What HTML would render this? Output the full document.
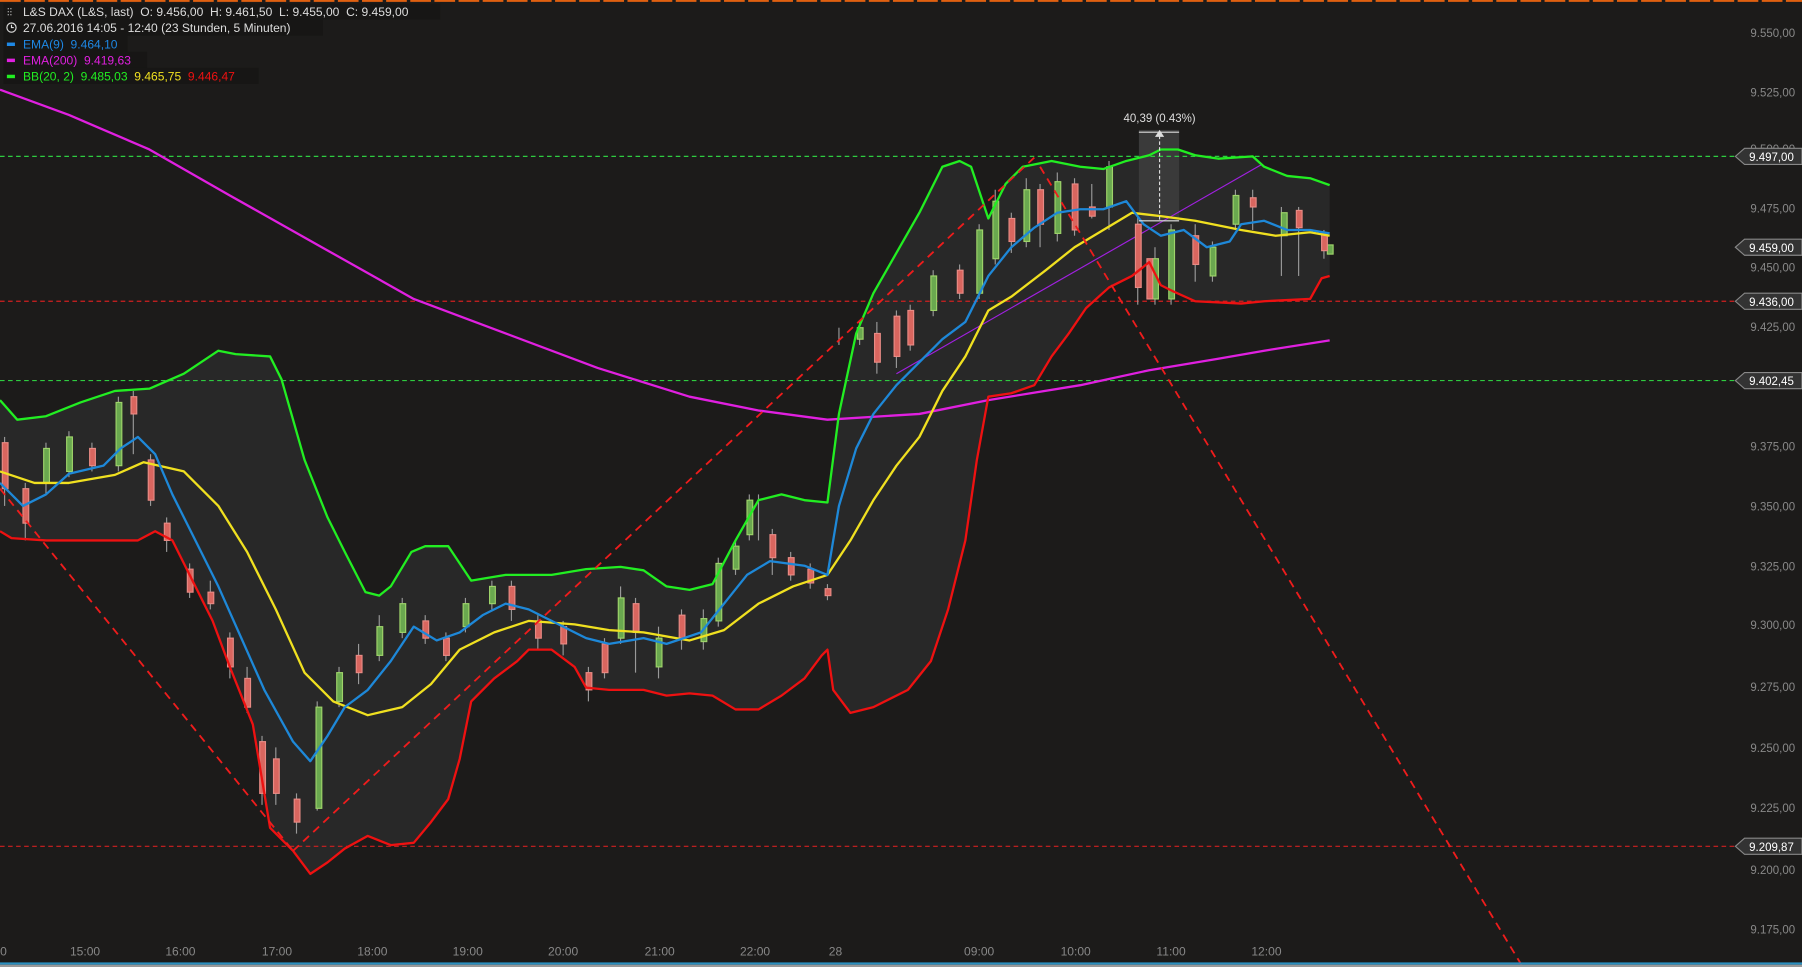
<!DOCTYPE html>
<html><head><meta charset="utf-8"><style>
html,body{margin:0;padding:0;background:#1c1b1a;overflow:hidden}
svg{display:block}
text{font-family:"Liberation Sans",sans-serif;white-space:pre}
</style></head><body>
<svg width="1802" height="967" viewBox="0 0 1568 841" preserveAspectRatio="none" xml:space="preserve">
<rect width="1568" height="841" fill="#1c1b1a"/>
<line x1="0" y1="0.8" x2="1568" y2="0.8" stroke="#e06010" stroke-width="1.6" stroke-dasharray="18 3"/>
<polygon fill="#2a2a2a" opacity="0.9" points="0,348 15,365 40,362 70,350 100,340 130,338 160,325 175,315 190,305 205,308 235,310 245,330 265,400 285,450 300,480 318,515 330,518 340,510 358,480 370,475 390,475 400,490 410,505 440,500 480,500 510,495 540,493 560,496 580,510 600,513 620,508 640,470 660,435 680,430 700,435 720,437 730,360 745,290 760,255 780,220 800,185 820,145 835,140 845,145 860,190 875,160 890,145 915,140 940,145 960,147 980,140 1000,135 1010,130 1025,130 1040,135 1060,138 1090,136 1100,145 1120,153 1140,155 1157,161 1157,240 1150,242 1140,260 1100,262 1080,264 1040,262 1020,253 1010,248 1000,228 985,240 965,250 945,268 930,290 915,310 900,335 880,342 860,345 850,400 840,470 825,530 810,575 790,600 760,615 740,620 725,600 720,565 715,570 700,590 680,605 660,617 640,617 620,605 600,603 580,605 560,600 530,600 510,598 500,580 480,565 460,565 450,575 430,590 410,610 400,660 390,695 375,715 360,733 340,735 320,727 300,738 285,750 270,760 255,740 235,720 220,630 200,580 185,540 165,500 150,470 135,462 120,470 80,470 40,470 10,468 0,462"/>
<rect x="991" y="113" width="35" height="80" fill="#3a3a3a"/>
<g stroke-dasharray="4 3" stroke-width="1">
<line x1="0" y1="136" x2="1510" y2="136" stroke="#2ecc40"/>
<line x1="0" y1="262" x2="1510" y2="262" stroke="#d02020"/>
<line x1="0" y1="331" x2="1510" y2="331" stroke="#2ecc40"/>
<line x1="0" y1="736" x2="1510" y2="736" stroke="#d02020"/>
</g>
<g fill="none" stroke-width="2" stroke-linejoin="round">
<polyline stroke="#e020e0" points="0,78 60,100 130,130 200,170 280,215 360,260 440,290 520,320 600,345 660,357 720,365 800,360 860,348 940,335 1000,322 1060,312 1100,305 1157,296"/>
<line x1="780" y1="325" x2="1098" y2="143" stroke="#a020e0" stroke-width="1"/>
</g>
<g stroke-width="1">
<g stroke="#999">
<line x1="4" y1="380" x2="4" y2="440"/><line x1="22" y1="420" x2="22" y2="470"/><line x1="40" y1="385" x2="40" y2="430"/><line x1="60" y1="375" x2="60" y2="415"/><line x1="80" y1="385" x2="80" y2="410"/><line x1="103" y1="345" x2="103" y2="410"/><line x1="116" y1="340" x2="116" y2="395"/><line x1="131" y1="395" x2="131" y2="440"/><line x1="145" y1="450" x2="145" y2="480"/><line x1="165" y1="490" x2="165" y2="520"/><line x1="183" y1="505" x2="183" y2="530"/><line x1="200" y1="550" x2="200" y2="590"/><line x1="215" y1="580" x2="215" y2="620"/><line x1="228" y1="640" x2="228" y2="700"/><line x1="240" y1="650" x2="240" y2="700"/><line x1="258" y1="690" x2="258" y2="725"/><line x1="276" y1="610" x2="276" y2="705"/><line x1="295" y1="580" x2="295" y2="615"/><line x1="312" y1="560" x2="312" y2="595"/><line x1="330" y1="535" x2="330" y2="575"/><line x1="350" y1="520" x2="350" y2="555"/><line x1="370" y1="535" x2="370" y2="560"/><line x1="388" y1="550" x2="388" y2="575"/><line x1="405" y1="520" x2="405" y2="550"/><line x1="428" y1="505" x2="428" y2="530"/><line x1="445" y1="505" x2="445" y2="540"/><line x1="468" y1="535" x2="468" y2="565"/><line x1="490" y1="540" x2="490" y2="570"/><line x1="512" y1="580" x2="512" y2="610"/><line x1="526" y1="555" x2="526" y2="590"/><line x1="540" y1="510" x2="540" y2="560"/><line x1="553" y1="520" x2="553" y2="585"/><line x1="573" y1="545" x2="573" y2="590"/><line x1="593" y1="530" x2="593" y2="565"/><line x1="612" y1="530" x2="612" y2="565"/><line x1="625" y1="485" x2="625" y2="545"/><line x1="640" y1="470" x2="640" y2="500"/><line x1="652" y1="430" x2="652" y2="470"/><line x1="660" y1="430" x2="660" y2="470"/><line x1="672" y1="460" x2="672" y2="500"/><line x1="688" y1="480" x2="688" y2="505"/><line x1="705" y1="490" x2="705" y2="512"/><line x1="720" y1="508" x2="720" y2="522"/><line x1="730" y1="285" x2="730" y2="300"/><line x1="748" y1="280" x2="748" y2="300"/><line x1="763" y1="280" x2="763" y2="325"/><line x1="780" y1="270" x2="780" y2="320"/><line x1="792" y1="265" x2="792" y2="305"/><line x1="812" y1="235" x2="812" y2="275"/><line x1="835" y1="230" x2="835" y2="260"/><line x1="852" y1="195" x2="852" y2="260"/><line x1="866" y1="165" x2="866" y2="230"/><line x1="880" y1="185" x2="880" y2="220"/><line x1="893" y1="155" x2="893" y2="215"/><line x1="905" y1="160" x2="905" y2="215"/><line x1="920" y1="150" x2="920" y2="210"/><line x1="935" y1="155" x2="935" y2="205"/><line x1="950" y1="160" x2="950" y2="190"/><line x1="965" y1="140" x2="965" y2="200"/><line x1="990" y1="185" x2="990" y2="265"/><line x1="1005" y1="215" x2="1005" y2="265"/><line x1="1019" y1="195" x2="1019" y2="265"/><line x1="1040" y1="195" x2="1040" y2="245"/><line x1="1055" y1="210" x2="1055" y2="245"/><line x1="1075" y1="165" x2="1075" y2="200"/><line x1="1090" y1="165" x2="1090" y2="200"/><line x1="1115" y1="180" x2="1115" y2="240"/><line x1="1130" y1="180" x2="1130" y2="240"/><line x1="1152" y1="200" x2="1152" y2="225"/>
</g>
<g fill="#6aa84f" stroke="#9ed36a">
<rect x="38" y="390" width="5" height="30"/><rect x="58" y="380" width="5" height="30"/><rect x="101" y="350" width="5" height="55"/><rect x="275" y="615" width="5" height="88"/><rect x="293" y="585" width="5" height="25"/><rect x="328" y="545" width="5" height="25"/><rect x="348" y="525" width="5" height="25"/><rect x="403" y="525" width="5" height="20"/><rect x="426" y="510" width="5" height="15"/><rect x="538" y="520" width="5" height="35"/><rect x="571" y="555" width="5" height="25"/><rect x="610" y="538" width="5" height="20"/><rect x="623" y="490" width="5" height="50"/><rect x="638" y="475" width="5" height="20"/><rect x="650" y="435" width="5" height="30"/><rect x="746" y="285" width="5" height="10"/><rect x="810" y="240" width="5" height="30"/><rect x="850" y="200" width="5" height="55"/><rect x="864" y="175" width="5" height="50"/><rect x="891" y="165" width="5" height="45"/><rect x="918" y="158" width="5" height="45"/><rect x="963" y="145" width="5" height="35"/><rect x="1017" y="200" width="5" height="60"/><rect x="1003" y="225" width="5" height="35"/><rect x="1053" y="215" width="5" height="25"/><rect x="1073" y="170" width="5" height="25"/><rect x="1115" y="185" width="5" height="20"/><rect x="1155" y="213" width="5" height="8"/>
</g>
<g fill="#d9665f" stroke="#e88a84">
<rect x="2" y="385" width="5" height="40"/><rect x="20" y="425" width="5" height="30"/><rect x="78" y="390" width="5" height="15"/><rect x="114" y="345" width="5" height="15"/><rect x="129" y="400" width="5" height="35"/><rect x="143" y="455" width="5" height="15"/><rect x="163" y="495" width="5" height="20"/><rect x="181" y="515" width="5" height="10"/><rect x="198" y="555" width="5" height="25"/><rect x="213" y="590" width="5" height="25"/><rect x="226" y="645" width="5" height="45"/><rect x="238" y="660" width="5" height="30"/><rect x="256" y="695" width="5" height="20"/><rect x="310" y="570" width="5" height="15"/><rect x="368" y="540" width="5" height="15"/><rect x="386" y="555" width="5" height="15"/><rect x="443" y="510" width="5" height="20"/><rect x="466" y="540" width="5" height="15"/><rect x="488" y="545" width="5" height="15"/><rect x="510" y="585" width="5" height="15"/><rect x="524" y="560" width="5" height="25"/><rect x="551" y="525" width="5" height="25"/><rect x="591" y="535" width="5" height="20"/><rect x="670" y="465" width="5" height="20"/><rect x="686" y="485" width="5" height="15"/><rect x="703" y="495" width="5" height="12"/><rect x="718" y="512" width="5" height="6"/><rect x="761" y="290" width="5" height="25"/><rect x="778" y="275" width="5" height="35"/><rect x="790" y="270" width="5" height="30"/><rect x="833" y="235" width="5" height="20"/><rect x="878" y="190" width="5" height="20"/><rect x="903" y="165" width="5" height="30"/><rect x="933" y="160" width="5" height="40"/><rect x="948" y="180" width="5" height="8"/><rect x="988" y="195" width="5" height="55"/><rect x="998" y="225" width="5" height="35"/><rect x="1038" y="205" width="5" height="25"/><rect x="1088" y="172" width="5" height="8"/><rect x="1128" y="183" width="5" height="15"/><rect x="1150" y="203" width="5" height="15"/>
</g>
</g>
<g fill="none" stroke-width="2" stroke-linejoin="round">
<polyline stroke="#22ee22" points="0,348 15,365 40,362 70,350 100,340 130,338 160,325 175,315 190,305 205,308 235,310 245,330 265,400 285,450 300,480 318,515 330,518 340,510 358,480 370,475 390,475 400,490 410,505 440,500 480,500 510,495 540,493 560,496 580,510 600,513 620,508 640,470 660,435 680,430 700,435 720,437 730,360 745,290 760,255 780,220 800,185 820,145 835,140 845,145 860,190 875,160 890,145 915,140 940,145 960,147 980,140 1000,135 1010,130 1025,130 1040,135 1060,138 1090,136 1100,145 1120,153 1140,155 1157,161"/>
<polyline stroke="#ee1111" points="0,462 10,468 40,470 80,470 120,470 135,462 150,470 165,500 185,540 200,580 220,630 235,720 255,740 270,760 285,750 300,738 320,727 340,735 360,733 375,715 390,695 400,660 410,610 430,590 450,575 460,565 480,565 500,580 510,598 530,600 560,600 580,605 600,603 620,605 640,617 660,617 680,605 700,590 715,570 720,565 725,600 740,620 760,615 790,600 810,575 825,530 840,470 850,400 860,345 880,342 900,335 915,310 930,290 945,268 965,250 985,240 1000,228 1010,248 1020,253 1040,262 1080,264 1100,262 1140,260 1150,242 1157,240"/>
<polyline stroke="#f0e020" points="0,410 30,420 60,420 100,413 125,402 160,410 190,440 215,480 240,530 265,585 290,610 320,622 350,615 375,595 400,565 430,550 460,540 500,543 530,548 560,550 600,557 630,548 660,525 690,510 720,500 740,470 760,435 780,405 800,380 820,340 840,310 860,270 880,258 910,235 935,215 960,200 985,185 1010,188 1040,192 1080,200 1110,205 1140,202 1157,205"/>
<polyline stroke="#1e88d8" points="0,420 20,440 40,430 60,412 90,405 105,390 120,380 135,395 150,430 170,470 190,510 210,555 230,600 255,645 270,662 285,640 300,615 320,600 340,575 360,545 380,557 400,550 420,535 440,525 460,530 490,545 510,555 530,560 560,555 580,560 610,550 630,525 650,500 670,488 700,492 720,500 730,440 745,390 760,360 780,335 800,315 820,295 840,280 860,240 880,215 900,198 920,185 940,182 960,182 980,175 995,195 1010,205 1030,200 1050,215 1070,210 1080,195 1100,192 1120,200 1140,200 1157,203"/>
<g stroke="#ee1c1c" stroke-dasharray="7 5" stroke-width="1.6">
<line x1="0" y1="425" x2="255" y2="740"/><line x1="255" y1="740" x2="900" y2="137"/><line x1="905" y1="145" x2="1325" y2="841"/>
</g>
<line x1="1009" y1="118" x2="1009" y2="192" stroke="#ddd" stroke-width="1" stroke-dasharray="3 2"/>
<line x1="991" y1="115" x2="1026" y2="115" stroke="#ddd" stroke-width="1"/>
<line x1="991" y1="192" x2="1026" y2="192" stroke="#ddd" stroke-width="1"/>
</g>
<polygon points="1005,119 1013,119 1009,113" fill="#ddd"/>
<text x="1009" y="106" fill="#ddd" font-size="10" text-anchor="middle">40,39 (0.43%)</text>
<g fill="#888" font-size="10" text-anchor="end">
<text x="1562" y="32">9.550,00</text><text x="1562" y="84">9.525,00</text><text x="1562" y="133">9.500,00</text><text x="1562" y="185">9.475,00</text><text x="1562" y="236">9.450,00</text><text x="1562" y="288">9.425,00</text><text x="1562" y="392">9.375,00</text><text x="1562" y="444">9.350,00</text><text x="1562" y="496">9.325,00</text><text x="1562" y="547">9.300,00</text><text x="1562" y="601">9.275,00</text><text x="1562" y="654">9.250,00</text><text x="1562" y="706">9.225,00</text><text x="1562" y="760">9.200,00</text><text x="1562" y="812">9.175,00</text>
</g>
<g font-size="10" fill="#fff">
<polygon points="1510,136 1518,129 1568,129 1568,143 1518,143" fill="#333" stroke="#888"/><text x="1522" y="140">9.497,00</text>
<polygon points="1510,215 1518,208 1568,208 1568,222 1518,222" fill="#333" stroke="#888"/><text x="1522" y="219">9.459,00</text>
<polygon points="1510,262 1518,255 1568,255 1568,269 1518,269" fill="#333" stroke="#888"/><text x="1522" y="266">9.436,00</text>
<polygon points="1510,331 1518,324 1568,324 1568,338 1518,338" fill="#333" stroke="#888"/><text x="1522" y="335">9.402,45</text>
<polygon points="1510,736 1518,729 1568,729 1568,743 1518,743" fill="#333" stroke="#888"/><text x="1522" y="740">9.209,87</text>
</g>
<g fill="#888" font-size="10.5" text-anchor="middle">
<text x="3" y="831">0</text><text x="74" y="831">15:00</text><text x="157" y="831">16:00</text><text x="241" y="831">17:00</text><text x="324" y="831">18:00</text><text x="407" y="831">19:00</text><text x="490" y="831">20:00</text><text x="574" y="831">21:00</text><text x="657" y="831">22:00</text><text x="727" y="831">28</text><text x="852" y="831">09:00</text><text x="936" y="831">10:00</text><text x="1019" y="831">11:00</text><text x="1102" y="831">12:00</text>
</g>
<rect x="0" y="837" width="1568" height="2" fill="#2a90c0"/>
<rect x="0" y="839" width="1568" height="2" fill="#999"/>
<rect x="3" y="3" width="380" height="14" fill="#171615"/>
<rect x="3" y="17" width="278" height="14" fill="#171615"/>
<rect x="3" y="31" width="108" height="14" fill="#171615"/>
<rect x="3" y="45" width="125" height="14" fill="#171615"/>
<rect x="3" y="59" width="222" height="14" fill="#171615"/>
<g font-size="10.5">
<text x="20" y="14" fill="#ddd">L&amp;S DAX (L&amp;S, last)  O: 9.456,00  H: 9.461,50  L: 9.455,00  C: 9.459,00</text>
<text x="6" y="14" fill="#ddd" font-size="9">⫶⫶</text>
<circle cx="10" cy="24" r="4" fill="none" stroke="#ddd"/><path d="M10 21.5V24H12" stroke="#ddd" fill="none"/>
<text x="20" y="28" fill="#ddd">27.06.2016 14:05 - 12:40 (23 Stunden, 5 Minuten)</text>
<rect x="6" y="37" width="7" height="3" fill="#1e88e5"/><text x="20" y="42" fill="#1e88e5">EMA(9)  9.464,10</text>
<rect x="6" y="51" width="7" height="3" fill="#e020e0"/><text x="20" y="56" fill="#e020e0">EMA(200)  9.419,63</text>
<rect x="6" y="65" width="7" height="3" fill="#22ee22"/><text x="20" y="70" fill="#22ee22">BB(20, 2)  9.485,03  <tspan fill="#f0e020">9.465,75</tspan>  <tspan fill="#ee1111">9.446,47</tspan></text>
</g>
</svg>
</body></html>
